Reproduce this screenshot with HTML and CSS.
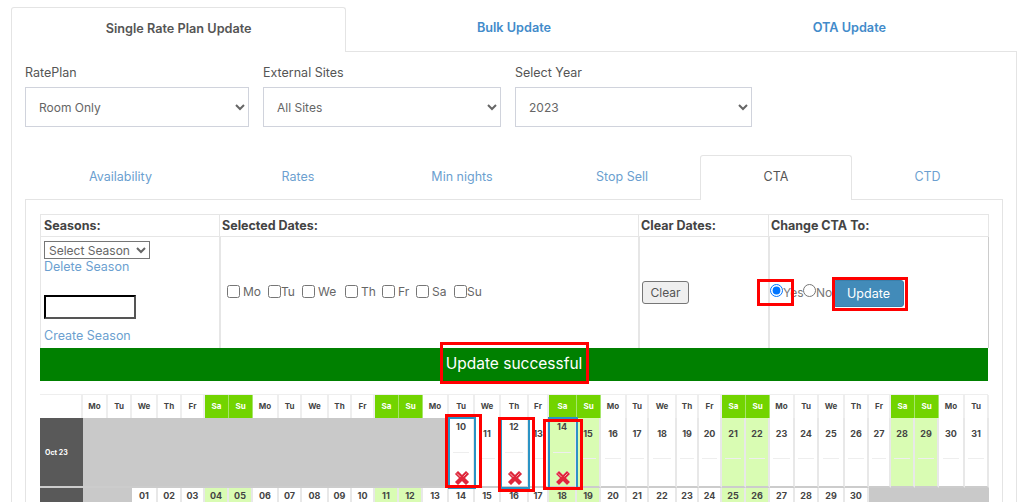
FILE: index.html
```html
<!DOCTYPE html>
<html lang="en">
<head>
<meta charset="utf-8">
<title>CTA Update</title>
<link rel="stylesheet" href="styles.css">
</head>
<body>
<svg class="defs" width="0" height="0" aria-hidden="true">
  <symbol id="x-icon" viewBox="1 1 16 16">
    <path d="M2 5 5 2l4 4 4-4 3 3-4 4 4 4-3 3-4-4-4 4-3-3 4-4z" fill="#e0263a" stroke="#e88a94" stroke-width="1" stroke-linejoin="round"/>
    <path d="M4 4.500 7.500 8M13.500 4.500 10.500 7.500" stroke="#f3b3b9" stroke-width="1" fill="none"/>
  </symbol>
</svg>
<main class="page">
  <nav class="top-tabs">
    <a class="top-tab active">Single Rate Plan Update</a>
    <a class="top-tab">Bulk Update</a>
    <a class="top-tab">OTA Update</a>
  </nav>
  <section class="top-panel">
    <div class="filters">
      <label class="field f1">RatePlan
        <select><option>Room Only</option></select>
      </label>
      <label class="field f2">External Sites
        <select><option>All Sites</option></select>
      </label>
      <label class="field f3">Select Year
        <select><option>2023</option></select>
      </label>
    </div>
    <nav class="sub-tabs">
      <a class="sub-tab">Availability</a>
      <a class="sub-tab">Rates</a>
      <a class="sub-tab">Min nights</a>
      <a class="sub-tab">Stop Sell</a>
      <a class="sub-tab active">CTA</a>
      <a class="sub-tab">CTD</a>
    </nav>
    <section class="sub-panel">
      <div class="controls">
        <div class="head">Seasons:</div>
        <div class="head">Selected Dates:</div>
        <div class="head">Clear Dates:</div>
        <div class="head">Change CTA To:</div>
        <div class="body seasons">
          <select class="season-select"><option>Select Season</option></select>
          <a class="link">Delete Season</a>
          <input class="season-input" type="text">
          <a class="link">Create Season</a>
        </div>
        <div class="body days">
          <label class="day d-mo"><input type="checkbox"><span>Mo</span></label>
          <label class="day d-tu"><input type="checkbox"><span>Tu</span></label>
          <label class="day d-we"><input type="checkbox"><span>We</span></label>
          <label class="day d-th"><input type="checkbox"><span>Th</span></label>
          <label class="day d-fr"><input type="checkbox"><span>Fr</span></label>
          <label class="day d-sa"><input type="checkbox"><span>Sa</span></label>
          <label class="day d-su"><input type="checkbox"><span>Su</span></label>
        </div>
        <div class="body clear-cell"><button class="clear">Clear</button></div>
        <div class="body change">
          <input class="radio" type="radio" name="cta" checked><span class="r-yes">Yes</span>
          <input class="radio" type="radio" name="cta"><span class="r-no">No</span>
          <button class="update">Update</button>
        </div>
      </div>
      <div class="success">Update successful</div>
      <div class="calendar">
        <div class="c-h"></div>
        <div class="c-h">Mo</div><div class="c-h">Tu</div><div class="c-h">We</div><div class="c-h">Th</div><div class="c-h">Fr</div><div class="c-h we">Sa</div><div class="c-h we">Su</div>
        <div class="c-h">Mo</div><div class="c-h">Tu</div><div class="c-h">We</div><div class="c-h">Th</div><div class="c-h">Fr</div><div class="c-h we">Sa</div><div class="c-h we">Su</div>
        <div class="c-h">Mo</div><div class="c-h">Tu</div><div class="c-h">We</div><div class="c-h">Th</div><div class="c-h">Fr</div><div class="c-h we">Sa</div><div class="c-h we">Su</div>
        <div class="c-h">Mo</div><div class="c-h">Tu</div><div class="c-h">We</div><div class="c-h">Th</div><div class="c-h">Fr</div><div class="c-h we">Sa</div><div class="c-h we">Su</div>
        <div class="c-h">Mo</div><div class="c-h">Tu</div><div class="c-h">We</div><div class="c-h">Th</div><div class="c-h">Fr</div><div class="c-h we">Sa</div><div class="c-h we">Su</div>
        <div class="c-h">Mo</div><div class="c-h">Tu</div>

        <div class="month">Oct 23</div>
        <div class="off span15"></div>
        <div class="c sel"><b>10</b><i></i><svg class="x"><use href="#x-icon"/></svg></div>
        <div class="c"><b>11</b><i></i></div>
        <div class="c sel"><b>12</b><i></i><svg class="x"><use href="#x-icon"/></svg></div>
        <div class="c"><b>13</b><i></i></div>
        <div class="c g sel"><b>14</b><i></i><svg class="x"><use href="#x-icon"/></svg></div>
        <div class="c g"><b>15</b><i></i></div>
        <div class="c"><b>16</b><i></i></div><div class="c"><b>17</b><i></i></div><div class="c"><b>18</b><i></i></div><div class="c"><b>19</b><i></i></div><div class="c"><b>20</b><i></i></div>
        <div class="c g"><b>21</b><i></i></div><div class="c g"><b>22</b><i></i></div>
        <div class="c"><b>23</b><i></i></div><div class="c"><b>24</b><i></i></div><div class="c"><b>25</b><i></i></div><div class="c"><b>26</b><i></i></div><div class="c"><b>27</b><i></i></div>
        <div class="c g"><b>28</b><i></i></div><div class="c g"><b>29</b><i></i></div>
        <div class="c"><b>30</b><i></i></div><div class="c"><b>31</b><i></i></div>

        <div class="month"></div>
        <div class="off span2"></div>
        <div class="c n"><b>01</b></div><div class="c n"><b>02</b></div><div class="c n"><b>03</b></div>
        <div class="c n g"><b>04</b></div><div class="c n g"><b>05</b></div>
        <div class="c n"><b>06</b></div><div class="c n"><b>07</b></div><div class="c n"><b>08</b></div><div class="c n"><b>09</b></div><div class="c n"><b>10</b></div>
        <div class="c n g"><b>11</b></div><div class="c n g"><b>12</b></div>
        <div class="c n"><b>13</b></div><div class="c n"><b>14</b></div><div class="c n"><b>15</b></div><div class="c n"><b>16</b></div><div class="c n"><b>17</b></div>
        <div class="c n g"><b>18</b></div><div class="c n g"><b>19</b></div>
        <div class="c n"><b>20</b></div><div class="c n"><b>21</b></div><div class="c n"><b>22</b></div><div class="c n"><b>23</b></div><div class="c n"><b>24</b></div>
        <div class="c n g"><b>25</b></div><div class="c n g"><b>26</b></div>
        <div class="c n"><b>27</b></div><div class="c n"><b>28</b></div><div class="c n"><b>29</b></div><div class="c n"><b>30</b></div>
        <div class="off span5"></div>
      </div>
    </section>
  </section>
  <div class="mark m-radio"></div>
  <div class="mark m-update"></div>
  <div class="mark m-success"></div>
  <div class="mark m-10"></div>
  <div class="mark m-12"></div>
  <div class="mark m-14"></div>
</main>
</body>
</html>
```
FILE: styles.css
```css
* { box-sizing: border-box; }
html, body { margin: 0; height: 502px; overflow: hidden; background: #fff; }
body { font-family: Inter, "Open Sans", sans-serif; color: #555; font-size: 12.500px; }
.defs { position: absolute; }
.page { position: relative; height: 502px; padding: 7px 7px 0 11px; overflow: hidden; }

.top-tabs { display: flex; height: 44px; position: relative; z-index: 1; }
.top-tab { width: 335.500px; display: flex; align-items: center; justify-content: center; font-weight: 600; font-size: 12.700px; color: #428bca; border: 1px solid transparent; padding-bottom: 3px; }
.top-tab.active { color: #555; background: #fff; border: 1px solid #e4e4e4; border-bottom: 0; border-radius: 3px 3px 0 0; height: 45px; }

.top-panel { border: 1px solid #e4e4e4; border-bottom: 0; padding: 0 13px; height: 460px; }
.filters { display: flex; gap: 14px; padding-top: 13px; height: 103px; }
.field { display: flex; flex-direction: column; gap: 6px; font-size: 12.500px; line-height: 16px; color: #555; }
.f1 { width: 224px; } .f2 { width: 238px; } .f3 { width: 237px; }
.field select { height: 40px; width: 100%; border: 1px solid #d0d3dc; background: #fff; color: #666; font: inherit; font-size: 12px; padding: 0 9px; border-radius: 0; }

.sub-tabs { display: grid; grid-template-columns: 191px 164px 164px 156px 152px 151px; height: 44px; position: relative; z-index: 1; }
.sub-tab { display: flex; align-items: center; justify-content: center; color: #6c9fd0; font-size: 12.500px; padding-bottom: 3px; }
.sub-tab.active { color: #555; background: #fff; border: 1px solid #e4e4e4; border-bottom: 0; border-radius: 3px 3px 0 0; height: 45px; }

.sub-panel { border: 1px solid #e4e4e4; border-bottom: 0; width: 978px; height: 303px; padding: 14px 14px 0; }
.controls { display: grid; grid-template-columns: 179px 419px 130px 221px; grid-template-rows: 23px 111px; }
.head { font-weight: 700; font-size: 12.500px; color: #444; border: 1px solid #e6e6e6; border-right: 0; padding: 2px 2px 0; line-height: 17px; }
.head:first-child { padding-left: 3px; }
.head:nth-child(4) { border-right: 1px solid #e6e6e6; }
.body { border-left: 2px solid #e6e6e6; }
.body.change { border-right: 1px solid #ccc; }

.seasons { display: flex; flex-direction: column; align-items: flex-start; padding: 4px 0 0 3px; border-left: 1px solid #e6e6e6; }
.season-select { width: 106px; height: 18px; font: inherit; font-size: 12px; color: #666; border: 1px solid #767676; background: #fff; padding: 0; border-radius: 0; }
.link { color: #6c9fd0; font-size: 12.500px; line-height: 16px; }
.season-input { width: 92px; height: 24px; margin: 20px 0 9px; border: 2px solid #555; border-style: inset; border-color: #555; background: #fff; }

.days { display: flex; align-items: center; padding: 0 0 2px 6px; font-size: 12px; color: #666; }
.day { display: flex; align-items: center; }
.day input { margin: 0; width: 13px; height: 13px; }
.d-mo { width: 41px; } .d-tu { width: 34px; } .d-we { width: 43px; } .d-th { width: 37px; } .d-fr { width: 34px; } .d-sa { width: 38px; } .d-su { width: 40px; }
.d-mo span, .d-we span, .d-th span, .d-fr span, .d-sa span { margin-left: 3px; }

.clear-cell { display: flex; align-items: center; padding-left: 2px; }
.clear { width: 47px; height: 23px; padding: 0; font: inherit; font-size: 12px; color: #555; background: #efefef; border: 1px solid #767676; border-radius: 3px; }

.change { display: flex; align-items: center; font-size: 12px; color: #777; }
.radio { margin: -5px 0 0; width: 13px; height: 13px; flex: none; }
.r-yes { width: 20px; flex: none; }
.r-no { width: 16px; flex: none; }
.update { width: 71px; height: 27px; padding: 0; margin: 1px 0 0 1px; font: inherit; font-size: 12.500px; color: #fff; background: #428bb9; border: 1px solid #3a7fab; border-radius: 3px; }

.success { height: 33px; background: #008000; color: #fff; font-size: 15.500px; display: flex; align-items: center; justify-content: center; padding-bottom: 2px; }

.calendar { margin-top: 13px; display: grid; grid-template-columns: 43px 25px 24px 26px 24px 23px 24px 24px 26px 23px 27px 23px 23px 24px 24px 26px 26px 26px 28px 20px 28px 24px 26px 22px 28px 22px 23px 24px 24px 25px 24px 26px 24px 22px 24px 24px 26px 24px; grid-template-rows: 23px 70px 70px; border-top: 1px solid #eee; font-size: 8px; font-weight: 700; color: #444; }
.c-h { display: flex; align-items: center; justify-content: center; background: #fff; border-right: 2px solid #eee; padding-bottom: 1px; }
.c-h.we { background: #72d400; color: #fff; border-right: 1px solid #a5e66a; }
.month { background: #595959; color: #fff; font-size: 7px; display: flex; align-items: center; padding-left: 5px; border-bottom: 2px solid #ccc; }
.off { background: #c9c9c9; border-bottom: 2px solid #ccc; }
.span15 { grid-column: span 15; } .span2 { grid-column: span 2; } .span5 { grid-column: span 5; }
.c { position: relative; display: flex; flex-direction: column; align-items: center; background: #fff; border-right: 2px solid #e8e8e8; border-bottom: 2px solid #ccc; padding-top: 10px; }
.c.n { padding-top: 2px; }
.c.g { background: #d9fcb3; }
.c b { font-size: 9px; line-height: 12px; font-weight: 700; color: #444; }
.c i { display: block; width: 70%; height: 1px; background: #eee; margin-top: 18px; }
.sel { outline: 2px solid #2b93c5; outline-offset: -1px; padding-top: 3px; z-index: 1; }
.sel i { margin-top: 19px; }
.x { position: absolute; left: 50%; bottom: 0; width: 16px; height: 16px; margin-left: -7px; }

.mark { position: absolute; border: 3px solid #f00; z-index: 3; pointer-events: none; }
.m-radio { left: 757px; top: 279px; width: 37px; height: 27px; }
.m-update { left: 832px; top: 277px; width: 76px; height: 34px; }
.m-success { left: 440px; top: 342px; width: 149px; height: 42px; }
.m-10 { left: 445px; top: 414px; width: 37px; height: 74px; }
.m-12 { left: 498px; top: 417px; width: 37px; height: 75px; }
.m-14 { left: 543px; top: 419px; width: 40px; height: 71px; }
```
